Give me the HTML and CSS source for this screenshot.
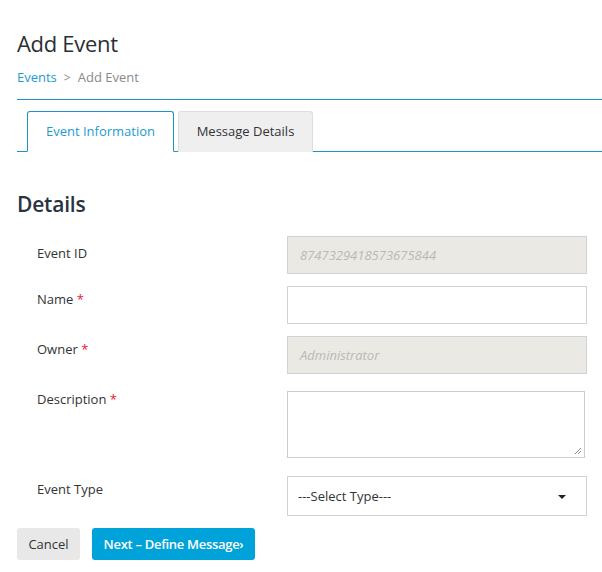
FILE: index.html
```html
<!DOCTYPE html>
<html>
<head>
<meta charset="utf-8">
<link rel="stylesheet" href="styles.css">
</head>
<body>
<div class="page">
  <h1 class="title">Add Event</h1>
  <div class="crumbs"><a class="crumb-link">Events</a><span class="sep">&gt;</span><span class="crumb-cur">Add Event</span></div>
  <div class="rule"></div>
  <div class="tabs">
    <div class="tab active">Event Information</div>
    <div class="tab">Message Details</div>
  </div>
  <h2 class="section">Details</h2>
  <div class="form">
    <div class="row row-id">
      <div class="label">Event ID</div>
      <div class="field ro"><span class="ph">8747329418573675844</span></div>
    </div>
    <div class="row">
      <div class="label">Name <span class="req">*</span></div>
      <div class="field"></div>
    </div>
    <div class="row">
      <div class="label">Owner <span class="req">*</span></div>
      <div class="field ro"><span class="ph">Administrator</span></div>
    </div>
    <div class="row row-desc">
      <div class="label">Description <span class="req">*</span></div>
      <div class="field area">
        <svg class="grip" width="8" height="8" viewBox="0 0 8 8"><path d="M7 1 L1 7 M7 4 L4 7" stroke="#888" stroke-width="1"/></svg>
      </div>
    </div>
    <div class="row row-type">
      <div class="label">Event Type</div>
      <div class="field select"><span class="sel-text">---Select Type---</span><span class="caret"></span></div>
    </div>
  </div>
  <div class="actions">
    <button class="btn btn-cancel">Cancel</button>
    <button class="btn btn-next">Next – Define Message›</button>
  </div>
</div>
</body>
</html>
```

FILE: styles.css
```css
html, body {
  margin: 0;
  padding: 0;
  background: #fff;
}
body {
  font-family: "Open Sans", "Noto Sans", sans-serif;
  color: #333;
}
.page {
  padding: 28px 0 0 17px;
}
.title {
  margin: 0;
  font-size: 22px;
  font-weight: 400;
  line-height: 30px;
  color: #2a2f36;
  letter-spacing: -0.3px;
}
.crumbs {
  margin-top: 9px;
  font-size: 13px;
  line-height: 20px;
  color: #8a8a8a;
}
.crumb-link {
  color: #1d9bd0;
}
.sep {
  margin: 0 7px;
  font-size: 12px;
}
.rule {
  margin-top: 11px;
  height: 1px;
  background: #1d94c4;
}
.tabs {
  display: flex;
  margin-top: 11px;
  padding-left: 10px;
  border-bottom: 1px solid #1d94c4;
  height: 40px;
}
.tab {
  box-sizing: border-box;
  height: 41px;
  padding: 0 16px;
  font-size: 13px;
  line-height: 39px;
  border: 1px solid #ddd;
  border-bottom: none;
  border-radius: 3px 3px 0 0;
  background: #efefef;
  color: #333;
  margin-right: 4px;
}
.tab.active {
  background: #fff;
  border: 1px solid #1d94c4;
  border-bottom: 1px solid #fff;
  color: #1d9bd0;
  width: 147px;
  text-align: center;
}
.tab:not(.active) {
  width: 135px;
  text-align: center;
}
.section {
  margin: 37px 0 0 0;
  font-size: 21px;
  line-height: 30px;
  font-weight: 600;
  color: #2a3340;
  letter-spacing: -0.2px;
}
.form {
  margin-top: 17px;
  padding-left: 20px;
}
.row {
  display: flex;
  margin-bottom: 12px;
}
.label {
  width: 250px;
  font-size: 13px;
  line-height: 20px;
  padding-top: 3px;
  color: #333;
}
.row-id .label {
  padding-top: 7px;
}
.row-desc {
  margin-top: 17px;
  margin-bottom: 18px;
}
.row-desc .label {
  padding-top: 0;
  margin-top: -2px;
}
.req {
  color: #e8202a;
}
.field {
  box-sizing: border-box;
  width: 300px;
  height: 38px;
  border: 1px solid #cfd3d8;
  background: #fff;
  display: flex;
  align-items: center;
  padding-left: 12px;
}
.field.ro {
  background: #eae9e3;
}
.ph {
  font-style: italic;
  font-size: 13px;
  color: #b9b9b9;
}
.field.area {
  width: 298px;
  height: 67px;
  border-color: #cccccc;
  position: relative;
}
.grip {
  position: absolute;
  right: 2px;
  bottom: 2px;
}
.field.select {
  height: 40px;
  padding-left: 10px;
  justify-content: space-between;
  padding-right: 20px;
}
.sel-text {
  font-size: 13px;
  color: #333;
}
.caret {
  width: 0;
  height: 0;
  border-left: 4px solid transparent;
  border-right: 4px solid transparent;
  border-top: 4px solid #222;
  margin-top: 2px;
}
.actions {
  display: flex;
  gap: 12px;
  margin-top: 0;
}
.btn {
  height: 32px;
  border: none;
  border-radius: 3px;
  font-family: "Open Sans", "Noto Sans", sans-serif;
  font-size: 13px;
  padding: 0;
}
.btn-cancel {
  width: 63px;
  background: #e8e8e8;
  color: #333;
}
.btn-next {
  width: 163px;
  background: #00a3d9;
  color: #fff;
  font-weight: 600;
  letter-spacing: -0.3px;
}
```
